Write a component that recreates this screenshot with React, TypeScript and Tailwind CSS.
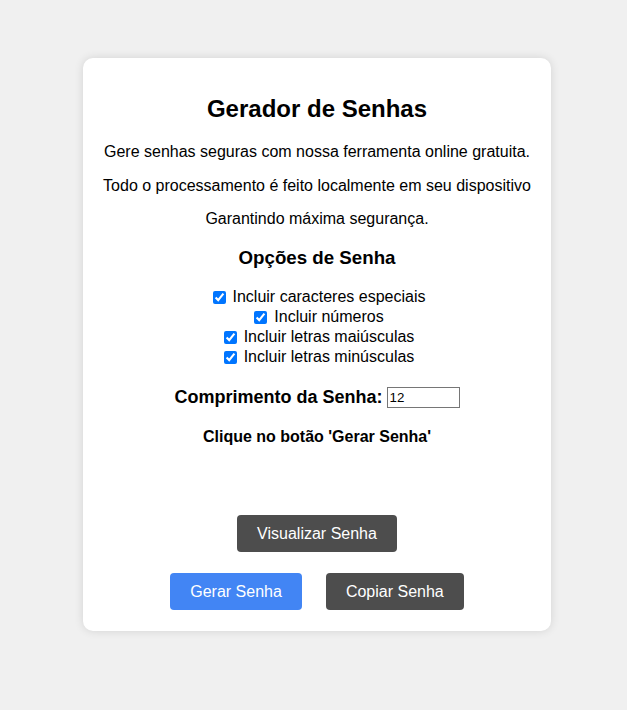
import React, { useState } from 'react';

const options = [
  'Incluir caracteres especiais',
  'Incluir números',
  'Incluir letras maiúsculas',
  'Incluir letras minúsculas',
];

const App: React.FC = () => {
  const [checked, setChecked] = useState([true, true, true, true]);
  const [length, setLength] = useState('12');

  return (
    <div className="min-h-[710px] bg-[#f0f0f0] pt-[58px] pl-[7px] font-['Liberation_Sans',Arial,sans-serif] text-black">
      <div className="mx-auto w-[468px] rounded-[10px] bg-white px-5 pt-[37px] pb-[21px] text-center shadow-[0_0_10px_rgba(0,0,0,0.12)]">
        <h1 className="text-[24px] font-bold leading-[28px]">Gerador de Senhas</h1>

        <p className="mt-[17px] text-[16px] leading-[24px]">
          Gere senhas seguras com nossa ferramenta online gratuita.
        </p>
        <p className="mt-[10px] text-[16px] leading-[24px]">
          Todo o processamento é feito localmente em seu dispositivo
        </p>
        <p className="mt-[9px] text-[16px] leading-[24px]">Garantindo máxima segurança.</p>

        <h3 className="mt-[16px] text-[18.72px] font-bold leading-[22px]">Opções de Senha</h3>

        {/* Options */}
        <div className="mt-[18px] flex flex-col items-center">
          {options.map((label, i) => (
            <label key={label} className="flex h-[20px] items-center text-[16px] leading-[20px]">
              <input
                type="checkbox"
                checked={checked[i]}
                onChange={() => setChecked(checked.map((c, j) => (j === i ? !c : c)))}
                className="ml-[4px] mr-[7px] h-[13px] w-[13px] accent-[#0075ff]"
              />
              {label}
            </label>
          ))}
        </div>

        <div className="mt-[20px] flex h-[20px] items-center justify-center">
          <span className="mr-[4px] text-[18px] font-bold leading-[20px]">Comprimento da Senha:</span>
          <input
            type="number"
            value={length}
            onChange={(e) => setLength(e.target.value)}
            className="h-[21px] w-[73px] border border-[#767676] px-[2px] text-[13.33px] leading-[17px] [appearance:textfield]"
          />
        </div>

        <p className="mt-[20px] text-[16px] font-bold leading-[20px]">Clique no botão 'Gerar Senha'</p>

        <div className="h-[68px]" />

        <button className="mx-auto block h-[37px] rounded-[4px] bg-[#4d4d4d] px-5 text-[16px] text-white">
          Visualizar Senha
        </button>

        <div className="mt-[21px] flex justify-center gap-6">
          <button className="h-[37px] rounded-[4px] bg-[#4285f4] px-5 text-[16px] text-white">Gerar Senha</button>
          <button className="h-[37px] rounded-[4px] bg-[#4d4d4d] px-5 text-[16px] text-white">Copiar Senha</button>
        </div>
      </div>
    </div>
  );
};

export default App;
